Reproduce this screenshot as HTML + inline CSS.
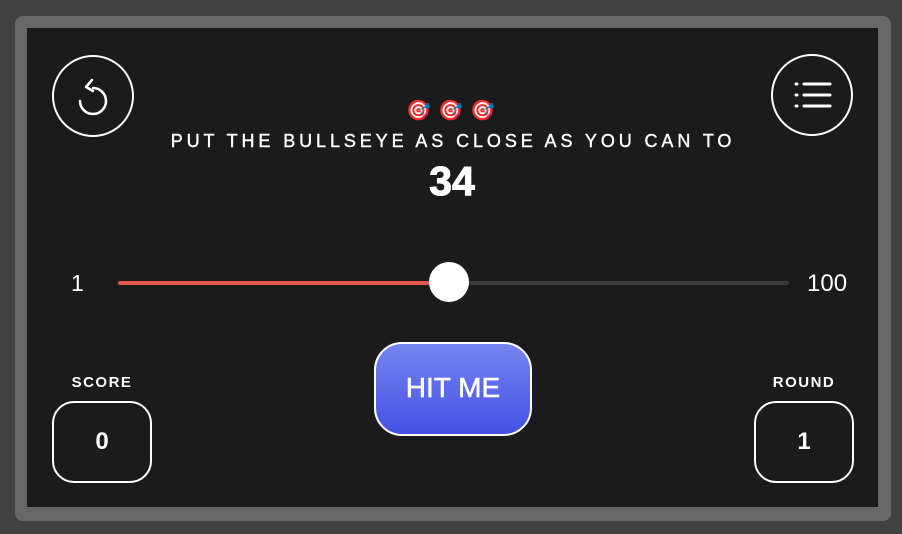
<!DOCTYPE html>
<html><head><meta charset="utf-8"><style>
html,body{margin:0;padding:0;width:902px;height:534px;overflow:hidden;background:#424242;font-family:"Liberation Sans",sans-serif;color:#fff}
.frame{position:absolute;left:15px;top:16px;width:876px;height:505px;background:#676767;border-radius:8px}
.inner{position:absolute;left:27px;top:28px;width:851px;height:479px;background:#1b1b1b}
.circ{position:absolute;width:82px;height:82px;border:2.5px solid #fff;border-radius:50%;box-sizing:border-box}
.box{position:absolute;width:100px;height:82px;border:2.5px solid #fff;border-radius:22px;box-sizing:border-box;text-align:center;line-height:78px;font-size:24px;font-weight:bold}
.lbl{position:absolute;font-size:15px;font-weight:bold;letter-spacing:1.5px;text-align:center;width:120px}
</style></head><body>
<div class="frame"></div>
<div class="inner"></div>
<div class="circ" style="left:52px;top:55px"></div>
<div class="circ" style="left:771px;top:54px"></div>
<svg width="902" height="534" style="position:absolute;left:0;top:0">
<path d="M93 88 A13 13 0 1 1 80 101" fill="none" stroke="#fff" stroke-width="2.5" stroke-linecap="round"/>
<path d="M92 80 L86 87 L93 91" fill="none" stroke="#fff" stroke-width="2.5" stroke-linecap="round" stroke-linejoin="round"/>
<g stroke="#fff" stroke-width="3" stroke-linecap="round"><line x1="796" y1="84" x2="797" y2="84"/><line x1="796" y1="95" x2="797" y2="95"/><line x1="796" y1="106" x2="797" y2="106"/><line x1="804" y1="84" x2="830" y2="84"/><line x1="804" y1="95" x2="830" y2="95"/><line x1="804" y1="106" x2="830" y2="106"/></g>
</svg>
<div style="position:absolute;left:0;width:908px;top:99px;text-align:center;font-size:20px;letter-spacing:7px;line-height:24px">🎯🎯🎯</div>
<div style="position:absolute;left:0;width:906px;top:131px;text-align:center;font-size:18px;letter-spacing:3.9px;-webkit-text-stroke:0.4px #fff">PUT THE BULLSEYE AS CLOSE AS YOU CAN TO</div>
<div style="position:absolute;left:0;width:904px;top:158px;text-align:center;font-size:41px;font-weight:900;-webkit-text-stroke:1px #fff">34</div>
<div style="position:absolute;left:71px;top:270px;font-size:23px">1</div>
<div style="position:absolute;left:807px;top:270px;font-size:24px">100</div>
<div style="position:absolute;left:118px;top:281px;width:671px;height:4px;background:#3a3a3a;border-radius:2px"></div>
<div style="position:absolute;left:118px;top:281px;width:331px;height:4px;background:#e8574c;border-radius:2px"></div>
<div style="position:absolute;left:429px;top:262px;width:40px;height:40px;background:#fff;border-radius:50%"></div>
<div style="position:absolute;left:374px;top:342px;width:158px;height:94px;box-sizing:border-box;border:2.5px solid #fff;border-radius:28px;background:linear-gradient(#7684f0,#4451e6);text-align:center;line-height:88px;font-size:28px;-webkit-text-stroke:0.5px #fff">HIT ME</div>
<div class="lbl" style="left:42px;top:374px">SCORE</div>
<div class="lbl" style="left:744px;top:374px">ROUND</div>
<div class="box" style="left:52px;top:401px">0</div>
<div class="box" style="left:754px;top:401px">1</div>
</body></html>
